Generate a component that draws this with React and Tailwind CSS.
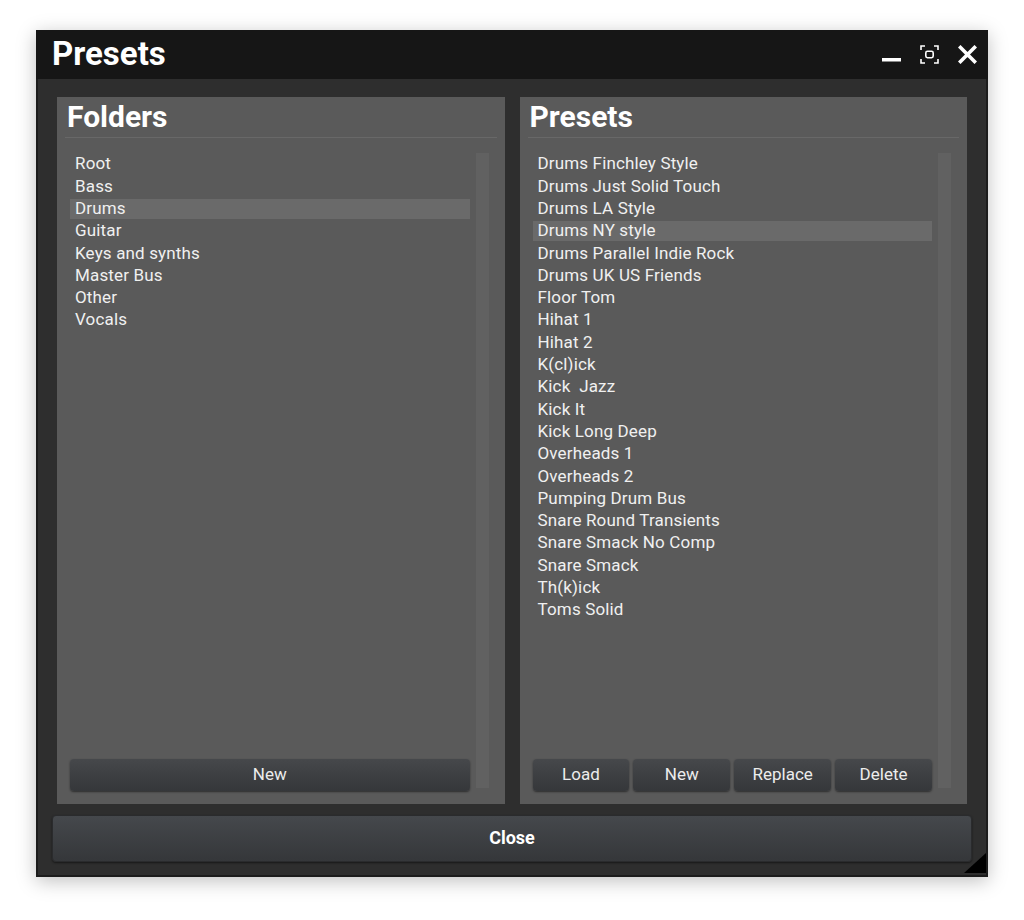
import React, { useState } from "react";

const folders = ["Root", "Bass", "Drums", "Guitar", "Keys and synths", "Master Bus", "Other", "Vocals"];

const presets = [
  "Drums Finchley Style",
  "Drums Just Solid Touch",
  "Drums LA Style",
  "Drums NY style",
  "Drums Parallel Indie Rock",
  "Drums UK US Friends",
  "Floor Tom",
  "Hihat 1",
  "Hihat 2",
  "K(cl)ick",
  "Kick  Jazz",
  "Kick It",
  "Kick Long Deep",
  "Overheads 1",
  "Overheads 2",
  "Pumping Drum Bus",
  "Snare Round Transients",
  "Snare Smack No Comp",
  "Snare Smack",
  "Th(k)ick",
  "Toms Solid",
];

const btn =
  "h-[32px] rounded-[4px] bg-gradient-to-b from-[#46484b] to-[#35373a] text-[#ececec] text-[17px] shadow-[0_1px_2px_rgba(0,0,0,0.5)] flex items-center justify-center";

function List({ items, selected, onSelect }) {
  return (
    <div className="flex flex-col">
      {items.map((item, i) => (
        <div key={i} className="h-[22.3px] flex items-center" onClick={() => onSelect(i)}>
          <div
            className={
              "w-full h-[20px] flex items-center pl-[5px] whitespace-pre " +
              (i === selected ? "bg-[#6a6a6a]" : "")
            }
          >
            {item}
          </div>
        </div>
      ))}
    </div>
  );
}

function Panel({ title, children, buttons }) {
  return (
    <div className="flex-1 bg-[#5a5a5a] flex flex-col px-[8px] pb-[13px]">
      <div className="h-[41px] pt-[1px] pl-[2px] text-[30px] font-bold text-white leading-[38px] border-b border-[#686868]">
        {title}
      </div>
      <div className="flex-1 flex pt-[15px] pl-[5px] pr-[8px]">
        <div className="flex-1 flex flex-col">
          <div className="flex-1 text-[17px] text-[#f0f0f0] tracking-[0.15px]">{children}</div>
          {buttons}
        </div>
        <div className="w-[13px] ml-[6px] mb-[3px] bg-[#616161]"></div>
      </div>
    </div>
  );
}

export default function App() {
  const [folder, setFolder] = useState(2);
  const [preset, setPreset] = useState(3);

  return (
    <div className="w-[1024px] h-[920px] bg-white pt-[30px] pl-[36px]" style={{ fontFamily: "Roboto, 'Noto Sans', sans-serif" }}>
      <div className="relative w-[952px] h-[847px] bg-[#2e2e2e] border-2 border-t-0 border-[#1c1c1c] shadow-[0_4px_18px_rgba(0,0,0,0.25)] flex flex-col">
        {/* title bar */}
        <div className="h-[49px] -mx-[2px] bg-[#161616] flex items-center pl-[16px] pr-[11px]">
          <div className="flex-1 text-[33px] font-bold text-white leading-none pb-[2px]">Presets</div>
          <div className="flex items-center gap-[19px]">
            <svg width="19" height="19" viewBox="0 0 19 19">
              <rect x="0" y="13" width="19" height="3.5" fill="#fff" />
            </svg>
            <svg width="19" height="19" viewBox="0 0 19 19" fill="none" stroke="#fff" strokeWidth="1.6">
              <path d="M1 5V1h4M14 1h4v4M18 14v4h-4M5 18H1v-4" />
              <rect x="5.8" y="6.3" width="7.4" height="6.4" rx="1.6" />
            </svg>
            <svg width="19" height="19" viewBox="0 0 19 19" stroke="#fff" strokeWidth="3.6" strokeLinecap="square">
              <path d="M2.5 2.5l14 14M16.5 2.5l-14 14" />
            </svg>
          </div>
        </div>

        {/* panels */}
        <div className="flex-1 flex gap-[15px] pl-[19px] pr-[19px] pt-[18px]">
          <Panel
            title="Folders"
            buttons={<button className={btn + " w-full mt-[7px]"}>New</button>}
          >
            <List items={folders} selected={folder} onSelect={setFolder} />
          </Panel>
          <Panel
            title="Presets"
            buttons={
              <div className="flex gap-[4px] mt-[7px]">
                <button className={btn + " flex-1"}>Load</button>
                <button className={btn + " flex-1"}>New</button>
                <button className={btn + " flex-1"}>Replace</button>
                <button className={btn + " flex-1"}>Delete</button>
              </div>
            }
          >
            <List items={presets} selected={preset} onSelect={setPreset} />
          </Panel>
        </div>

        <div className="px-[14px] pt-[11px] pb-[13px]">
          <button className="w-full h-[47px] rounded-[4px] bg-gradient-to-b from-[#45484c] to-[#35373a] border border-[#2a2b2d] text-white text-[18px] font-bold leading-none pb-[2px] shadow-[0_1px_2px_rgba(0,0,0,0.5)]">
            Close
          </button>
        </div>

        {/* resize grip */}
        <svg className="absolute right-0 bottom-[2px]" width="22" height="20" viewBox="0 0 22 20">
          <path d="M22 0V20H0Z" fill="#000" />
        </svg>
      </div>
    </div>
  );
}
